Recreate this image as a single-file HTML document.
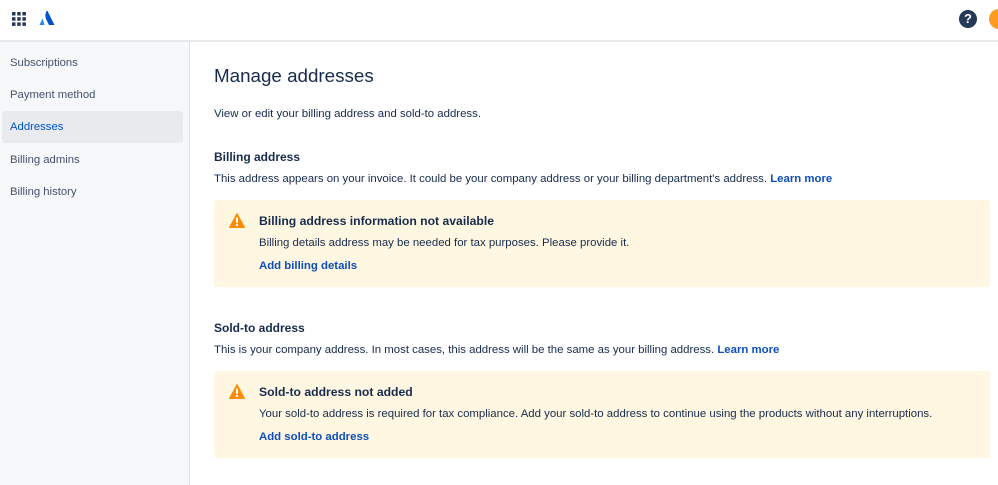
<!DOCTYPE html>
<html><head><meta charset="utf-8"><style>
*{margin:0;padding:0;box-sizing:border-box}
body{width:998px;height:485px;overflow:hidden;background:#fff;font-family:"Liberation Sans",sans-serif;color:#172b4d;position:relative}
.hdr{position:absolute;left:0;top:0;width:998px;height:42px;border-bottom:2px solid #e6e8eb;background:#fff}
.side{position:absolute;left:0;top:42px;width:190px;height:443px;background:#f7f8f9;border-right:1px solid #dfe1e6}
.nav{position:absolute;left:10px;font-size:11.3px;color:#42526e}
.sel{position:absolute;left:2px;top:111px;width:181px;height:32px;background:#e9eaee;border-radius:3px}
.a{position:absolute;white-space:nowrap}
.t{font-size:11.4px;color:#172b4d}
.h{font-size:12px;font-weight:bold;color:#172b4d}
.lk{color:#0c4ebf;font-weight:bold}
.box{position:absolute;left:214px;width:776px;height:87px;background:#fff7e1;border-radius:3px}
</style></head><body>
<div class="hdr">
<svg style="position:absolute;left:12px;top:12px" width="14" height="14" viewBox="0 0 14 14" fill="#253858"><rect x="0" y="0" width="3.5" height="3.5"/><rect x="5.2" y="0" width="3.5" height="3.5"/><rect x="10.4" y="0" width="3.5" height="3.5"/><rect x="0" y="5.2" width="3.5" height="3.5"/><rect x="5.2" y="5.2" width="3.5" height="3.5"/><rect x="10.4" y="5.2" width="3.5" height="3.5"/><rect x="0" y="10.4" width="3.5" height="3.5"/><rect x="5.2" y="10.4" width="3.5" height="3.5"/><rect x="10.4" y="10.4" width="3.5" height="3.5"/></svg>
<svg style="position:absolute;left:39px;top:10px" width="16" height="16" viewBox="0 0 16 16"><path d="M3.5 8.5 L0.5 15 H5.5 Z" fill="#2684ff"/><path d="M7.5 1 C6 4 6 7 7.5 10 L10 15 H15.5 L8.5 1 Z" fill="#0052cc"/></svg>
<div style="position:absolute;left:959px;top:10px;width:18px;height:18px;border-radius:50%;background:#253858;color:#fff;font-size:13px;font-weight:bold;text-align:center;line-height:18px">?</div>
<div style="position:absolute;left:989px;top:9px;width:20px;height:20px;border-radius:50%;background:#ff991f"></div>
</div>
<div class="side"></div>
<div class="sel"></div>
<div class="nav" style="top:57px">Subscriptions</div>
<div class="nav" style="top:89px">Payment method</div>
<div class="nav" style="top:121px;color:#0052cc">Addresses</div>
<div class="nav" style="top:154px">Billing admins</div>
<div class="nav" style="top:186px">Billing history</div>

<div class="a" style="left:214px;top:65px;font-size:18.8px;color:#172b4d">Manage addresses</div>
<div class="a t" style="left:214px;top:108px">View or edit your billing address and sold-to address.</div>
<div class="a h" style="left:214px;top:150px">Billing address</div>
<div class="a t" style="left:214px;top:173px">This address appears on your invoice. It could be your company address or your billing department's address. <span class="lk">Learn more</span></div>
<div class="box" style="top:200px"></div>
<svg class="a" style="left:229px;top:213px" width="16" height="15" viewBox="0 0 16 15"><path d="M8 0.5 L15.5 14.5 H0.5 Z" fill="#ff8b00" stroke="#ff8b00" stroke-linejoin="round"/><rect x="7" y="4.5" width="2" height="5.5" fill="#fff"/><rect x="7" y="11" width="2" height="2" fill="#fff"/></svg>
<div class="a" style="left:259px;top:214px;font-size:12.2px;font-weight:bold">Billing address information not available</div>
<div class="a t" style="left:259px;top:237px">Billing details address may be needed for tax purposes. Please provide it.</div>
<div class="a t lk" style="left:259px;top:260px">Add billing details</div>

<div class="a h" style="left:214px;top:321px">Sold-to address</div>
<div class="a t" style="left:214px;top:344px">This is your company address. In most cases, this address will be the same as your billing address. <span class="lk">Learn more</span></div>
<div class="box" style="top:371px"></div>
<svg class="a" style="left:229px;top:384px" width="16" height="15" viewBox="0 0 16 15"><path d="M8 0.5 L15.5 14.5 H0.5 Z" fill="#ff8b00" stroke="#ff8b00" stroke-linejoin="round"/><rect x="7" y="4.5" width="2" height="5.5" fill="#fff"/><rect x="7" y="11" width="2" height="2" fill="#fff"/></svg>
<div class="a" style="left:259px;top:385px;font-size:12.2px;font-weight:bold">Sold-to address not added</div>
<div class="a t" style="left:259px;top:408px">Your sold-to address is required for tax compliance. Add your sold-to address to continue using the products without any interruptions.</div>
<div class="a t lk" style="left:259px;top:431px">Add sold-to address</div>
</body></html>
